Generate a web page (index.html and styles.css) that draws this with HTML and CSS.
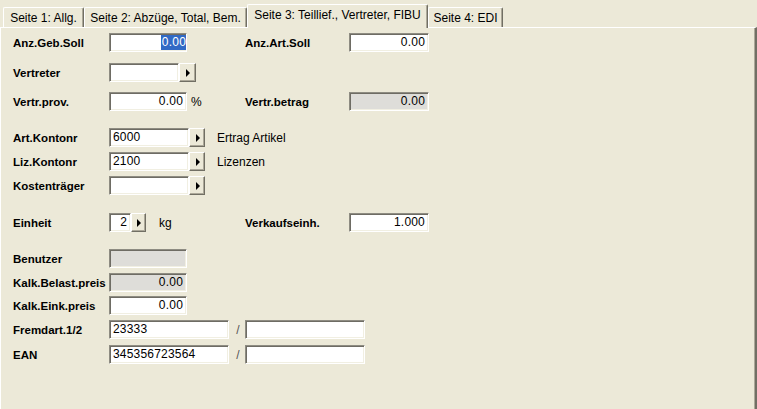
FILE: index.html
```html
<!DOCTYPE html>
<html lang="de">
<head>
<meta charset="utf-8">
<title>Seite 3</title>
<link rel="stylesheet" href="styles.css">
</head>
<body>
<div class="tabs">
  <div class="tab t1">Seite 1: Allg.</div>
  <div class="tab t2">Seite 2: Abzüge, Total, Bem.</div>
  <div class="tab t3 active">Seite 3: Teillief., Vertreter, FIBU</div>
  <div class="tab t4">Seite 4: EDI</div>
</div>
<div class="panel">
  <div class="row r1">
    <div class="lbl">Anz.Geb.Soll</div>
    <div class="c1"><div class="fld w78 num"><span class="sel">0.00</span></div></div>
    <div class="lbl2">Anz.Art.Soll</div>
    <div class="fld w80 num">0.00</div>
  </div>
  <div class="row sp-a">
    <div class="lbl">Vertreter</div>
    <div class="c1"><div class="fld w70"></div><div class="btn"><span class="tri"></span></div></div>
  </div>
  <div class="row sp-b">
    <div class="lbl">Vertr.prov.</div>
    <div class="c1"><div class="fld w78 num">0.00</div><span class="unit pct">%</span></div>
    <div class="lbl2">Vertr.betrag</div>
    <div class="fld w80 num ro">0.00</div>
  </div>
  <div class="row sp-l">
    <div class="lbl">Art.Kontonr</div>
    <div class="c1"><div class="fld w80">6000</div><div class="btn b16"><span class="tri"></span></div><span class="desc">Ertrag Artikel</span></div>
  </div>
  <div class="row sp-s">
    <div class="lbl">Liz.Kontonr</div>
    <div class="c1"><div class="fld w80">2100</div><div class="btn b16"><span class="tri"></span></div><span class="desc">Lizenzen</span></div>
  </div>
  <div class="row sp-s">
    <div class="lbl">Kostenträger</div>
    <div class="c1"><div class="fld w80"></div><div class="btn b16"><span class="tri"></span></div></div>
  </div>
  <div class="row sp-xl">
    <div class="lbl">Einheit</div>
    <div class="c1"><div class="fld w22 num">2</div><div class="btn b15"><span class="tri"></span></div><span class="unit kg">kg</span></div>
    <div class="lbl2">Verkaufseinh.</div>
    <div class="fld w80 num">1.000</div>
  </div>
  <div class="row sp-l">
    <div class="lbl">Benutzer</div>
    <div class="c1"><div class="fld w78 ro"></div></div>
  </div>
  <div class="row sp-s">
    <div class="lbl">Kalk.Belast.preis</div>
    <div class="c1"><div class="fld w78 num ro">0.00</div></div>
  </div>
  <div class="row sp-xs">
    <div class="lbl">Kalk.Eink.preis</div>
    <div class="c1"><div class="fld w78 num">0.00</div></div>
  </div>
  <div class="row sp-s">
    <div class="lbl">Fremdart.1/2</div>
    <div class="pair"><div class="fld w120">23333</div><span class="slash">/</span><div class="fld w120"></div></div>
  </div>
  <div class="row sp-t">
    <div class="lbl">EAN</div>
    <div class="pair"><div class="fld w120">345356723564</div><span class="slash">/</span><div class="fld w120"></div></div>
  </div>
</div>
</body>
</html>
```

FILE: styles.css
```css
html, body {
  margin: 0;
  padding: 0;
  background: #ECE9D8;
  width: 757px;
  height: 409px;
  overflow: hidden;
  font-family: "Liberation Sans", Arial, sans-serif;
  font-size: 12px;
  color: #000;
}

.tabs {
  display: flex;
  align-items: flex-end;
  height: 27px;
  padding-left: 3px;
  box-sizing: border-box;
  position: relative;
  z-index: 2;
}

.tab {
  box-sizing: border-box;
  height: 20px;
  line-height: 20px;
  text-align: center;
  white-space: nowrap;
  background: #ECE9D8;
  border-top: 1px solid #fff;
  border-left: 1px solid #fff;
  border-right: 1px solid #716F64;
  box-shadow: inset -1px 0 0 #ACA899;
  border-radius: 2px 2px 0 0;
}

.t1 { width: 81px; }
.t2 { width: 163px; }
.t3 { width: 181px; }
.t4 { width: 75px; }

.tab.active {
  height: 24px;
  line-height: 21px;
  margin-bottom: -1px;
  padding-bottom: 2px;
}

.panel {
  position: relative;
  z-index: 1;
  box-sizing: border-box;
  height: 382px;
  border-top: 1px solid #fff;
  border-left: 1px solid #fff;
  border-right: 2px solid #716F64;
  box-shadow: inset -1px 0 0 #ACA899;
  padding-top: 5px;
  display: flex;
  flex-direction: column;
}

.row {
  display: flex;
  align-items: center;
  height: 19px;
  margin-top: 5px;
}
.row.r1 { margin-top: 0; }
.row.sp-a { margin-top: 11px; }
.row.sp-b { margin-top: 10px; }
.row.sp-l { margin-top: 17px; }
.row.sp-xl { margin-top: 18px; }
.row.sp-s { margin-top: 5px; }
.row.sp-xs { margin-top: 4px; }
.row.sp-t { margin-top: 6px; }

.lbl {
  width: 96px;
  flex-shrink: 0;
  padding-left: 12px;
  font-weight: bold;
  font-size: 11.5px;
  white-space: nowrap;
}

.c1 {
  width: 136px;
  flex-shrink: 0;
  display: flex;
  align-items: center;
}

.lbl2 {
  width: 104px;
  flex-shrink: 0;
  font-weight: bold;
  font-size: 11.5px;
  white-space: nowrap;
}

.fld {
  flex-shrink: 0;
  box-sizing: border-box;
  height: 19px;
  line-height: 17px;
  background: #fff;
  border: 1px solid;
  border-color: #8E8C82 #FFFFFF #FFFFFF #8E8C82;
  box-shadow: inset 1px 1px 0 #6E6C64, inset -1px -1px 0 #F1EFE2;
  padding: 0 3px;
  white-space: nowrap;
  overflow: hidden;
  letter-spacing: 0.2px;
}
.fld.num { text-align: right; }
.fld.ro { background: #DEDDD9; }

.w22 { width: 22px; }
.w70 { width: 70px; }
.w78 { width: 78px; }
.w80 { width: 80px; }
.w120 { width: 120px; }

.sel {
  background: #316AC5;
  color: #fff;
  display: inline-block;
  line-height: 15px;
  padding: 0 1px;
  margin-right: -4px;
}

.btn {
  flex-shrink: 0;
  box-sizing: border-box;
  width: 17px;
  height: 19px;
  background: #ECE9D8;
  border: 1px solid;
  border-color: #FFFFFF #716F64 #716F64 #FFFFFF;
  box-shadow: inset -1px -1px 0 #ACA899;
  display: flex;
  align-items: center;
  justify-content: center;
}
.btn.b16 { width: 16px; }
.btn.b15 { width: 15px; }

.tri {
  width: 0;
  height: 0;
  border-top: 4.5px solid transparent;
  border-bottom: 4.5px solid transparent;
  border-left: 4px solid #000;
  margin-left: 1px;
}

.unit { flex-shrink: 0; }
.unit.pct { margin-left: 4px; }
.unit.kg { margin-left: 13px; }
.desc { margin-left: 12px; white-space: nowrap; }

.pair {
  display: flex;
  align-items: center;
}
.slash {
  width: 16px;
  text-align: center;
  color: #555;
  padding-left: 2px;
  box-sizing: border-box;
}
```
